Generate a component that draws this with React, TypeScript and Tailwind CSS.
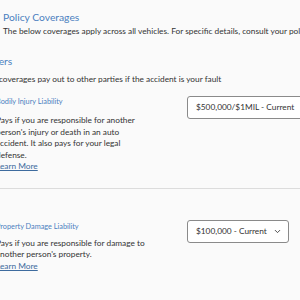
import React from 'react';
import { ChevronDown } from 'lucide-react';

const font = { fontFamily: 'Lato, "Open Sans", sans-serif' };

function CoverageRow({
  title,
  body,
  value,
  bodyGap,
  selectTop,
}: {
  title: string;
  body: string;
  value: string;
  bodyGap: string;
  selectTop: string;
}) {
  return (
    <div className="grid grid-cols-[191px_auto] items-start">
      <div className="w-[150px]">
        <h4 className="text-[7.3px] leading-[10px] text-[#4b7fbf]">{title}</h4>
        <p className={`${bodyGap} text-[8.3px] leading-[11.5px] text-[#333]`}>{body}</p>
        <a className="block text-[8.3px] leading-[11.5px] text-[#3d6b9e] underline">Learn More</a>
      </div>
      <div
        className={`${selectTop} flex h-[23px] w-fit items-center gap-[6px] rounded-[3px] border border-[#8a8a8a] bg-white pl-[8px] pr-[6px] text-[8.3px] text-[#333] whitespace-nowrap`}
      >
        <span>{value}</span>
        <ChevronDown className="h-[9px] w-[9px] text-[#444]" strokeWidth={2.5} />
      </div>
    </div>
  );
}

export default function App() {
  return (
    <div className="h-[300px] w-[300px] overflow-hidden bg-[#fafafa]" style={font}>
      <div className="w-[420px] pt-[10px]">
        <h2 className="ml-[3px] text-[10.3px] leading-[14px] text-[#4b7fbf]">Policy Coverages</h2>
        <p className="ml-[3px] mt-[1px] text-[8.3px] leading-[12px] text-[#333] whitespace-nowrap">
          The below coverages apply across all vehicles. For specific details, consult your policy documents.
        </p>
        <h3 className="ml-[-19px] mt-[17px] text-[10.3px] leading-[14px] text-[#4b7fbf]">Others</h3>
        <p className="ml-[-25px] mt-[5px] text-[8.3px] leading-[12px] text-[#333] whitespace-nowrap">
          These coverages pay out to other parties if the accident is your fault
        </p>
        <div className="ml-[-4px] mt-[12px]">
          <CoverageRow
            title="Bodily Injury Liability"
            body="Pays if you are responsible for another person's injury or death in an auto accident. It also pays for your legal defense."
            value="$500,000/$1MIL - Current"
            bodyGap="mt-[8px]"
            selectTop="mt-[-1px]"
          />
        </div>
        <div className="mt-[15px] h-px w-full bg-[#dcdcdc]" />
        <div className="ml-[-4px] mt-[33px]">
          <CoverageRow
            title="Property Damage Liability"
            body="Pays if you are responsible for damage to another person's property."
            value="$100,000 - Current"
            bodyGap="mt-[6px]"
            selectTop="mt-[-2px]"
          />
        </div>
      </div>
    </div>
  );
}
